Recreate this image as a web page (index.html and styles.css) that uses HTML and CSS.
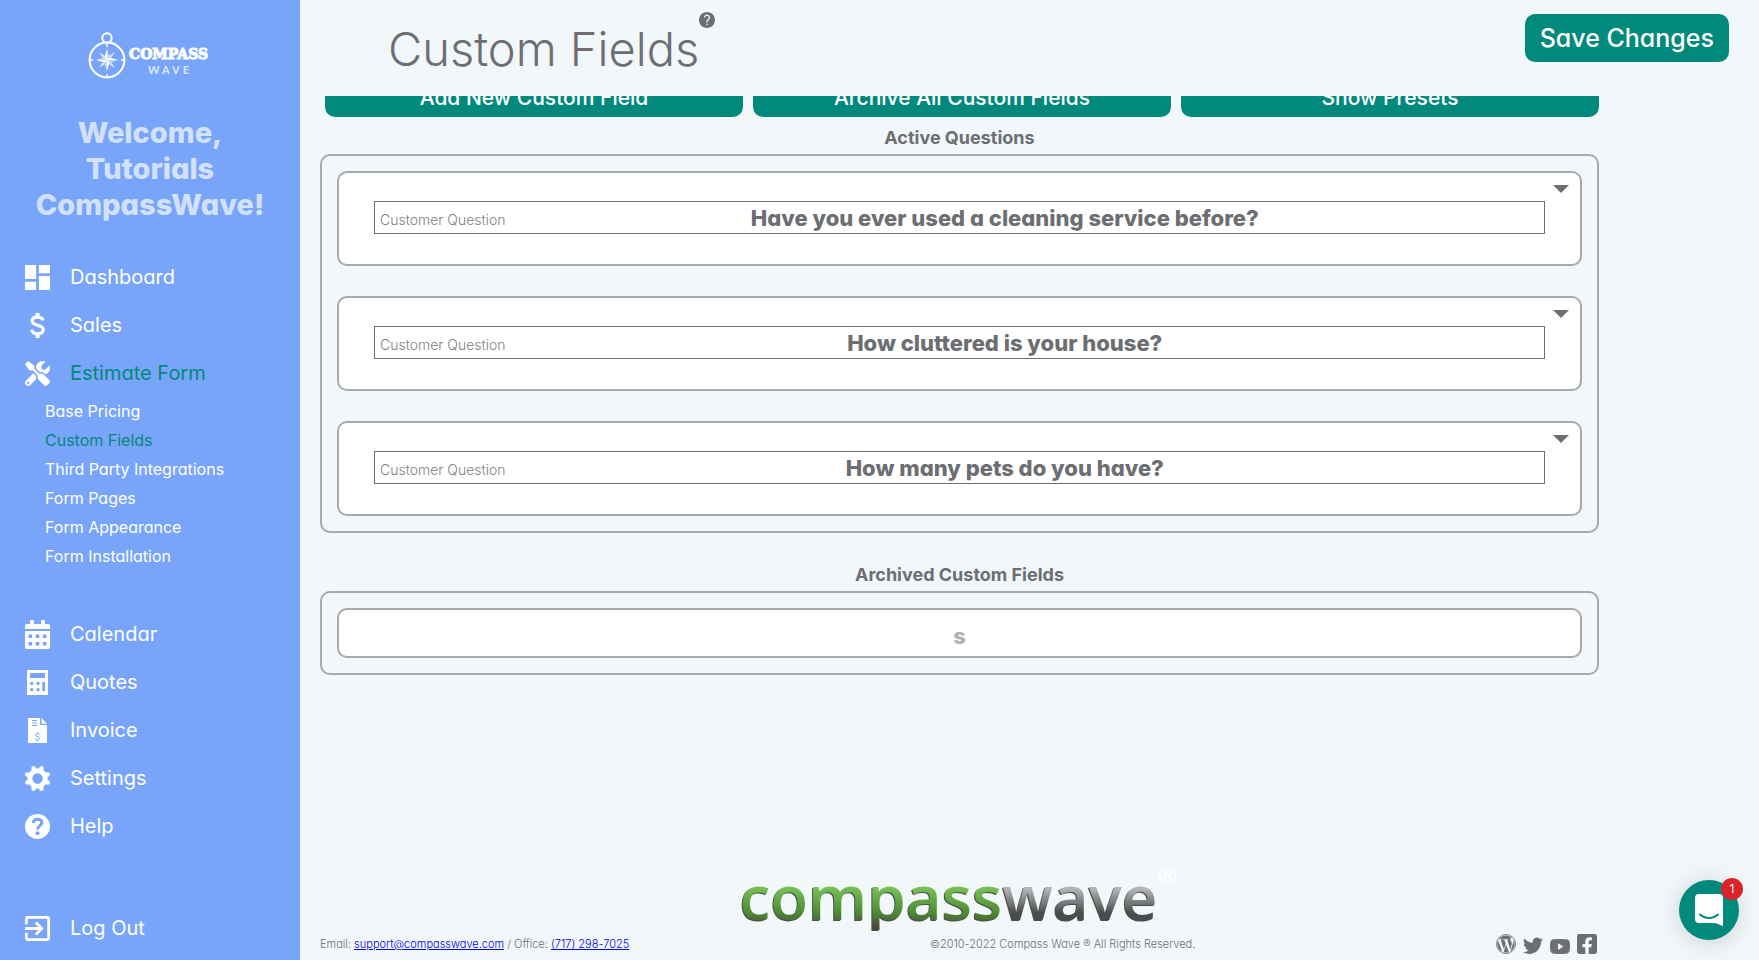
FILE: index.html
```html
<!DOCTYPE html>
<html lang="en">
<head>
    <meta charset="UTF-8" />
    <meta name="viewport" content="width=device-width, initial-scale=1.0" />
    <title>Custom Fields - Compass Wave</title>
    <link rel="stylesheet" href="styles.css">
</head>
<body>
    <aside class="sidebar">
        <a class="brand" href="#" aria-label="Compass Wave">
            <svg width="124" height="48" viewBox="0 0 124 48">
                <g fill="none" stroke="#fff">
                    <circle cx="19" cy="6" r="4.7" stroke-width="2" />
                    <circle cx="19" cy="28" r="17.4" stroke-width="2" />
                    <path d="M19 11v4M19 45v-3M2 28h3M36 28h-3" stroke-width="1.5" />
                </g>
                <path fill="#dce8fe" d="M11 20l6 4-2 2zM27 20l-4 6-2-2zM11 36l4-6 2 2zM27 36l-6-4 2-2z" />
                <path fill="#fff" d="M19 17l2.500 8.500L30 28l-8.500 2.500L19 39l-2.500-8.500L8 28l8.500-2.500z" />
                <path fill="#b9d1fc" d="M19 28V18l2 7zM19 28h10l-7 2zM19 28v10l-2-7zM19 28H9l7-2z" />
                <text class="brand-name" x="41" y="27">COMPASS</text>
                <text class="brand-sub" x="60" y="42">WAVE</text>
            </svg>
        </a>
        <h2 class="welcome">Welcome,<br>Tutorials<br>CompassWave!</h2>

        <nav class="menu">
            <a class="menu-item" href="#">
                <svg class="icon" viewBox="3 3 18 18"><path d="M3 13h8V3H3v10zm0 8h8v-6H3v6zm10 0h8V11h-8v10zm0-18v6h8V3h-8z" /></svg>
                Dashboard
            </a>
            <a class="menu-item" href="#">
                <svg class="icon" viewBox="0 0 25 25"><path class="line" stroke-width="3.200" d="M18 7.500C17.500 5 15.500 4.200 12.500 4.200 9.500 4.200 7.200 5.500 7.200 8c0 5.500 11 3 11 8.600 0 2.700-2.400 4.200-5.700 4.200-3.200 0-5.300-1.300-5.800-4" /><path d="M10.500 0h4v4h-4zM10.500 21h4v4h-4z" /></svg>
                Sales
            </a>
            <a class="menu-item active" href="#">
                <svg class="icon" viewBox="0 0 512 512"><path d="M501.1 395.7L384 278.6c-23.1-23.1-57.6-27.6-85.4-13.9L192 158.1V96L64 0 0 64l96 128h62.1l106.6 106.6c-13.6 27.8-9.2 62.3 13.9 85.4l117.1 117.1c14.6 14.6 38.2 14.6 52.7 0l52.7-52.7c14.5-14.6 14.5-38.2 0-52.7zM331.7 225c28.3 0 54.9 11 74.900 31l19.400 19.400c15.800-6.900 30.800-16.500 43.800-29.500 37.100-37.100 49.700-89.300 37.900-136.700-2.200-9-13.500-12.100-20.100-5.500l-74.400 74.400-67.900-11.300L334 98.900l74.400-74.400c6.600-6.600 3.400-17.900-5.700-20.200-47.400-11.700-99.600.9-136.600 37.900-28.500 28.500-41.900 66.100-41.200 103.600l82.100 82.100c8.100-1.900 16.500-2.900 24.700-2.900zm-103.900 82l-56.700-56.700L18.700 402.800c-25 25-25 65.500 0 90.500s65.500 25 90.500 0l123.600-123.600c-7.600-19.900-9.900-41.600-5-62.700zM64 472c-13.200 0-24-10.800-24-24 0-13.300 10.700-24 24-24s24 10.700 24 24c0 13.200-10.700 24-24 24z" /></svg>
                Estimate Form
            </a>
            <div class="submenu">
                <a href="#">Base Pricing</a>
                <a class="active" href="#">Custom Fields</a>
                <a href="#">Third Party Integrations</a>
                <a href="#">Form Pages</a>
                <a href="#">Form Appearance</a>
                <a href="#">Form Installation</a>
            </div>
            <a class="menu-item" href="#">
                <svg class="icon icon-tall" viewBox="0 0 25 29"><path fill-rule="evenodd" d="M5 4V1.500a1.500 1.500 0 0 1 4 0V4h7V1.500a1.500 1.500 0 0 1 4 0V4h3a2 2 0 0 1 2 2v3H0V6a2 2 0 0 1 2-2zM0 11h25v16a2 2 0 0 1-2 2H2a2 2 0 0 1-2-2zM3.500 14.500v3.500H7v-3.500zm7.200 0v3.500h3.600v-3.500zm7.300 0v3.500h3.500v-3.500zM3.500 22v3.500H7V22zm7.200 0v3.500h3.600V22zm7.300 0v3.500h3.500V22z" /></svg>
                Calendar
            </a>
            <a class="menu-item" href="#">
                <svg class="icon" viewBox="0 0 25 25"><path d="M2 0h21v25H2z" /><g class="cut"><path d="M5 3h15v5H5zM17.300 12h2.700v9h-2.700z" /><circle cx="6.700" cy="13.500" r="1.700" /><circle cx="13" cy="13.500" r="1.700" /><circle cx="6.700" cy="19.700" r="1.700" /><circle cx="13" cy="19.700" r="1.700" /></g></svg>
                Quotes
            </a>
            <a class="menu-item" href="#">
                <svg class="icon" viewBox="0 0 25 25"><path d="M3 0h12v7h7v18H3zM16.500 0L22 5.700h-5.500z" /><g class="cut-line"><path d="M7 2.500h5M7 5h5M7 7.500h5M12.500 14v1.500M12.500 21.500V23M14.700 16.500c-.3-.8-1-1.100-2.200-1.100-2.500 0-2.800 2.600-.6 3 3.400.5 3.400 3.400.6 3.400-1.300 0-2-.4-2.300-1.300" /></g></svg>
                Invoice
            </a>
            <a class="menu-item" href="#">
                <svg class="icon" viewBox="-12.500 -12.500 25 25">
                    <circle class="line" r="7.700" stroke-width="5" />
                    <g class="line" stroke-width="4.400" stroke-linecap="round"><path d="M3.900-9.500L4-10.200M-3.900-9.500L-4-10.200M3.900 9.500L4 10.200M-3.900 9.500L-4 10.200M9.500-3.900L10.200-4M9.500 3.900L10.200 4M-9.500-3.900L-10.200-4M-9.500 3.900L-10.200 4" /></g>
                </svg>
                Settings
            </a>
            <a class="menu-item" href="#">
                <svg class="icon" viewBox="0 0 25 25"><circle cx="12.500" cy="12.500" r="12.500" /><path class="cut-line thick" d="M8.300 9c.2-2.300 1.700-3.700 4.200-3.700s4.300 1.300 4.300 3.500c0 3-4.300 3.200-4.300 6.700" /><circle class="cut" cx="12.500" cy="19.300" r="2" /></svg>
                Help
            </a>
            <a class="menu-item logout" href="#">
                <svg class="icon" viewBox="3 3 18 18"><path d="M10.090 15.590L11.500 17l5-5-5-5-1.410 1.410L12.670 11H3v2h9.670l-2.580 2.590zM19 3H5c-1.110 0-2 .9-2 2v4h2V5h14v14H5v-4H3v4c0 1.100.89 2 2 2h14c1.100 0 2-.9 2-2V5c0-1.100-.9-2-2-2z" /></svg>
                Log Out
            </a>
        </nav>
    </aside>

    <div class="page">
        <header>
            <h1>Custom Fields</h1>
            <button class="hint" aria-label="About custom fields">
                <svg width="16" height="16" viewBox="2 2 20 20"><path d="M12 2C6.480 2 2 6.480 2 12s4.480 10 10 10 10-4.480 10-10S17.520 2 12 2zm.8 16.500h-1.600v-1.700h1.600v1.700zm2.070-7.250l-.9.920C13.250 12.900 12.800 13.500 12.800 15h-1.600v-.5c0-1.100.45-2.100 1.170-2.830l1.240-1.260c.37-.36.59-.86.59-1.410 0-1.200-1-2.200-2.200-2.200s-2.200 1-2.200 2.200H8.200c0-2.100 1.700-3.800 3.800-3.800s3.800 1.700 3.800 3.800c0 .88-.36 1.680-.93 2.250z" /></svg>
            </button>
            <button class="save">Save Changes</button>
        </header>

        <main>
            <div class="actions">
                <button>Add New Custom Field</button>
                <button>Archive All Custom Fields</button>
                <button>Show Presets</button>
            </div>

            <h3>Active Questions</h3>
            <section class="panel">
                <div class="card">
                    <button class="caret" aria-label="Expand question"></button>
                    <div class="question">
                        <label for="q1">Customer Question</label>
                        <input id="q1" type="text" value="Have you ever used a cleaning service before?">
                    </div>
                </div>
                <div class="card">
                    <button class="caret" aria-label="Expand question"></button>
                    <div class="question">
                        <label for="q2">Customer Question</label>
                        <input id="q2" type="text" value="How cluttered is your house?">
                    </div>
                </div>
                <div class="card">
                    <button class="caret" aria-label="Expand question"></button>
                    <div class="question">
                        <label for="q3">Customer Question</label>
                        <input id="q3" type="text" value="How many pets do you have?">
                    </div>
                </div>
            </section>

            <h3 class="archived-title">Archived Custom Fields</h3>
            <section class="panel">
                <div class="archived">s</div>
            </section>
        </main>

        <footer>
            <div class="footer-logo"><span class="green">compass</span><span class="grey">wave</span><sup>®</sup></div>
            <div class="footer-row">
                <p>Email: <a href="mailto:support@compasswave.com">support@compasswave.com</a> / Office: <a href="tel:7172987025">(717) 298-7025</a></p>
                <p>©2010-2022 Compass Wave ® All Rights Reserved.</p>
                <div class="social">
                    <a href="#" aria-label="WordPress"><svg width="20" height="20" viewBox="0 0 16 16"><circle cx="8" cy="8" r="7.600" fill="none" stroke="#6d6e71" stroke-width=".7" /><path d="M12.633 7.653c0-.848-.305-1.435-.566-1.892l-.08-.13c-.317-.51-.594-.958-.594-1.480 0-.63.478-1.218 1.152-1.218h.09A6.838 6.838 0 0 0 8 1.137 6.855 6.855 0 0 0 2.266 4.230c.16.005.313.009.442.009.717 0 1.828-.087 1.828-.087.37-.022.414.521.044.565 0 0-.371.044-.785.065l2.500 7.434 1.500-4.506-1.070-2.929c-.369-.022-.719-.065-.719-.065-.37-.022-.326-.588.043-.566 0 0 1.134.087 1.808.087.718 0 1.830-.087 1.830-.087.37-.022.413.522.043.566 0 0-.372.043-.785.065l2.480 7.377.684-2.287.054-.173c.27-.86.469-1.495.469-2.046zM1.137 8a6.864 6.864 0 0 0 3.868 6.176L1.730 5.206A6.837 6.837 0 0 0 1.137 8zM6.061 14.583l2.059-5.983 2.109 5.777c.013.034.03.065.048.094a6.860 6.860 0 0 1-4.216.112zM14.863 8c0 2.530-1.370 4.740-3.413 5.930l2.096-6.060c.392-.98.522-1.763.522-2.459 0-.252-.017-.487-.046-.706A6.800 6.800 0 0 1 14.863 8z" /></svg></a>
                    <a href="#" aria-label="Twitter"><svg width="20" height="17" viewBox="0 1.500 16 13.600"><path d="M5.026 15c6.038 0 9.341-5.003 9.341-9.334 0-.14 0-.282-.006-.422A6.685 6.685 0 0 0 16 3.542a6.658 6.658 0 0 1-1.889.518 3.301 3.301 0 0 0 1.447-1.817 6.533 6.533 0 0 1-2.087.793A3.286 3.286 0 0 0 7.875 6.030a9.325 9.325 0 0 1-6.767-3.429 3.289 3.289 0 0 0 1.018 4.382A3.323 3.323 0 0 1 .64 6.575v.045a3.288 3.288 0 0 0 2.632 3.218 3.203 3.203 0 0 1-.865.115 3.230 3.230 0 0 1-.614-.057 3.283 3.283 0 0 0 3.067 2.277A6.588 6.588 0 0 1 .78 13.580a6.320 6.320 0 0 1-.78-.045A9.344 9.344 0 0 0 5.026 15z" /></svg></a>
                    <a href="#" aria-label="YouTube"><svg width="20" height="15" viewBox="0 0 20 15"><path fill-rule="evenodd" d="M4 .3Q10-.3 16 .3 19.500.6 19.800 4 20.200 7.500 19.800 11 19.500 14.400 16 14.700 10 15.300 4 14.700.5 14.400.2 11-.2 7.500.2 4 .5.600 4 .3zM8 4.200v6.800l5.500-3.400z" /></svg></a>
                    <a href="#" aria-label="Facebook"><svg width="20" height="20" viewBox="0 32 448 448"><path d="M400 32H48A48 48 0 0 0 0 80v352a48 48 0 0 0 48 48h137.250V327.690h-63V256h63v-54.640c0-62.150 37-96.480 93.670-96.480 27.140 0 55.520 4.840 55.520 4.840v61h-31.270c-30.810 0-40.420 19.120-40.420 38.730V256h68.780l-11 71.690h-57.780V480H400a48 48 0 0 0 48-48V80a48 48 0 0 0-48-48z" /></svg></a>
                </div>
            </div>
        </footer>
    </div>

    <button class="chat" aria-label="Open chat">
        <svg width="28" height="32" viewBox="0 0 28 32"><path fill="#fff" d="M4 0h20a4 4 0 0 1 4 4v28c-3-1-6-2.700-9-3H4a4 4 0 0 1-4-4V4a4 4 0 0 1 4-4z" /><path fill="none" stroke="#01897b" stroke-width="2" stroke-linecap="round" d="M5 20.500c5 4.500 13 4.500 18 0" /></svg>
        <span class="badge">1</span>
    </button>
</body>
</html>
```

FILE: styles.css
```css
* {
    box-sizing: border-box;
}

body {
    margin: 0;
    display: flex;
    min-height: 100vh;
    font-family: Inter, "Open Sans", sans-serif;
    /* single-storey a */
    font-feature-settings: "cv11";
    background-color: #f2f7fa;
    color: #6d6e71;
}

button, input {
    font: inherit;
    font-feature-settings: inherit;
    color: inherit;
}

button {
    border: none;
    padding: 0;
    background: none;
    cursor: pointer;
}

h1, h2, h3, p {
    margin: 0;
}

svg {
    display: block;
}

/* sidebar */
.sidebar {
    flex: 0 0 300px;
    background-color: #78a5f9;
    color: #fff;
}

.sidebar a {
    color: #fff;
    text-decoration: none;
}

.brand {
    display: flex;
    justify-content: center;
    padding-top: 32px;
}

.brand-name {
    font-family: "DejaVu Serif", serif;
    font-size: 14px;
    font-weight: bold;
    fill: #fff;
    stroke: #fff;
}

.brand-sub {
    font-family: Lato, sans-serif;
    font-size: 11px;
    font-weight: bold;
    letter-spacing: 3px;
    fill: #dce8fe;
}

.welcome {
    margin: 35px 0 30px;
    font-size: 29px;
    font-weight: 800;
    line-height: 36px;
    text-align: center;
    color: #d2e2fd;
}

.menu-item {
    display: flex;
    align-items: center;
    gap: 20px;
    height: 48px;
    padding-left: 25px;
    font-size: 20px;
}

.sidebar a.active {
    color: #01897b;
}

.icon {
    width: 25px;
    height: 25px;
    fill: #fff;
}

.icon-tall {
    height: 29px;
}

.line {
    fill: none;
    stroke: #fff;
}

.cut {
    fill: #78a5f9;
}

.cut-line {
    fill: none;
    stroke: #78a5f9;
    stroke-width: 1;
}

.thick {
    stroke-width: 3;
}

.submenu {
    display: flex;
    flex-direction: column;
    padding: 0 0 39px 45px;
    font-size: 16px;
    line-height: 29px;
}

.logout {
    margin-top: 54px;
}

/* page */
.page {
    flex: 1;
    display: flex;
    flex-direction: column;
    min-width: 0;
}

header {
    position: sticky;
    top: 0;
    z-index: 1;
    display: flex;
    align-items: flex-start;
    height: 96px;
    padding: 12px 30px 0 88px;
    background-color: #f2f7fa;
}

h1 {
    font-size: 47px;
    font-weight: 300;
    line-height: 74px;
}

.hint svg {
    fill: #6d6e71;
}

.save {
    height: 48px;
    margin: 2px 0 0 auto;
    padding: 0 15px;
    border-radius: 10px;
    background-color: #01897b;
    color: #fff;
    font-size: 25px;
    font-weight: 500;
}

/* the list is scrolled a little way under the header */
main {
    margin-top: -22px;
    padding: 0 160px 0 20px;
}

.actions {
    display: flex;
    gap: 10px;
    padding-left: 5px;
}

.actions button {
    flex: 1;
    height: 43px;
    padding-top: 3px;
    border-radius: 10px;
    background-color: #01897b;
    color: #fff;
    font-size: 21px;
    font-weight: 500;
}

h3 {
    padding: 9px 0 4px;
    font-size: 18px;
    line-height: 24px;
    text-align: center;
}

.archived-title {
    padding-top: 30px;
}

.panel {
    display: flex;
    flex-direction: column;
    gap: 30px;
    padding: 15px;
    border: 2px solid #a7a9ac;
    border-radius: 10px;
}

.card, .archived {
    border: 2px solid #a7a9ac;
    border-radius: 10px;
    background-color: #fff;
}

.card {
    position: relative;
    padding: 28px 35px 30px;
}

.caret {
    position: absolute;
    top: 12px;
    right: 11px;
    border: 8px solid transparent;
    border-top-color: #6d6e71;
    border-bottom: none;
}

.question {
    display: flex;
    align-items: center;
    height: 33px;
    padding-left: 5px;
    border: 1px solid #6d6e71;
}

.question label {
    padding-top: 4px;
    font-size: 14px;
    font-weight: 300;
    color: #808184;
}

.question input {
    flex: 1;
    min-width: 0;
    padding: 0 40px 0 0;
    border: none;
    outline: none;
    background: none;
    font-size: 22px;
    font-weight: 800;
    text-align: center;
}

.archived {
    height: 50px;
    padding-top: 3px;
    font-size: 22px;
    font-weight: 800;
    line-height: 46px;
    text-align: center;
    color: #b0b1b3;
}

/* footer */
footer {
    margin-top: auto;
    padding: 0 162px 4px 20px;
}

.footer-logo {
    display: flex;
    justify-content: center;
    padding-bottom: 2px;
    font-family: "Open Sans", sans-serif;
    font-size: 62px;
    font-weight: 600;
    line-height: 68px;
}

.footer-logo span {
    -webkit-background-clip: text;
    background-clip: text;
    color: transparent;
    filter: drop-shadow(-1px 1px 0 #4a4f4a);
}

.footer-logo .green {
    background-image: linear-gradient(#79c558 35%, #4e8a34 75%, #4b4a3a 95%);
}

.footer-logo .grey {
    background-image: linear-gradient(#b4b4b6 40%, #4a4b4d 75%);
}

.footer-logo sup {
    font-size: 24px;
    line-height: 24px;
    color: #fff;
}

.footer-row {
    display: flex;
    justify-content: space-between;
    align-items: center;
    height: 24px;
    font-size: 11px;
    font-weight: 300;
}

.footer-row p a {
    color: #0000ee;
}

.social {
    display: flex;
    align-items: flex-end;
    gap: 7px;
}

.social svg {
    fill: #6d6e71;
}

/* chat launcher */
.chat {
    position: fixed;
    right: 20px;
    bottom: 20px;
    z-index: 2;
    display: flex;
    justify-content: center;
    align-items: center;
    width: 60px;
    height: 60px;
    border-radius: 50%;
    background-color: #01897b;
    box-shadow: 0 2px 24px rgba(0, 0, 0, 0.16);
}

.badge {
    position: absolute;
    top: -2px;
    right: -4px;
    width: 22px;
    height: 22px;
    border-radius: 50%;
    background-color: #d9222a;
    color: #fff;
    font-size: 12px;
    line-height: 22px;
}
```
